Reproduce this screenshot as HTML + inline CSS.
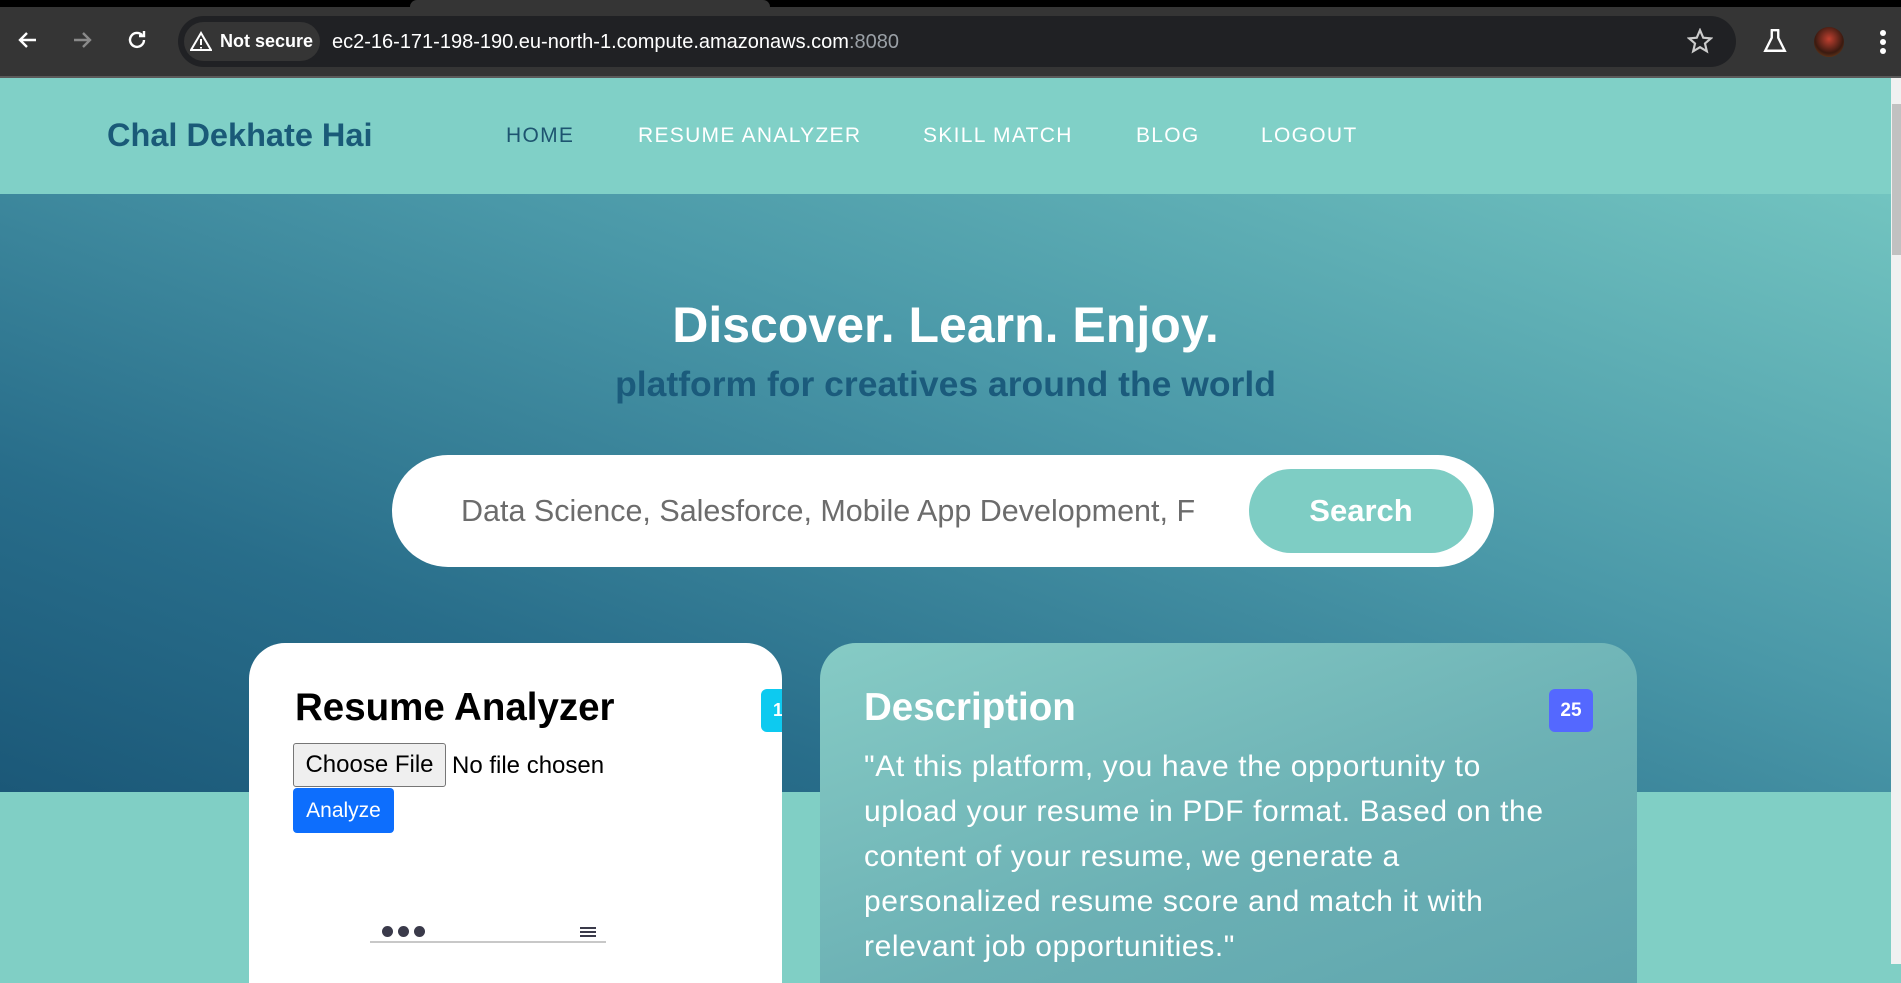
<!DOCTYPE html>
<html><head><meta charset="utf-8"><style>
*{box-sizing:border-box;margin:0;padding:0}
body{width:1901px;height:964px;overflow:hidden;font-family:"Liberation Sans",sans-serif;background:#80cfc5;position:relative}
.abs{position:absolute}
#chrome{left:0;top:0;width:1901px;height:78px;background:#353535;border-bottom:2px solid #5a5a5a}
#tabtop{left:0;top:0;width:1901px;height:7px;background:#000}
#tab{left:410px;top:0;width:360px;height:7px;background:#353535;border-radius:8px 8px 0 0}
#omni{left:178px;top:16px;width:1558px;height:51px;background:#202124;border-radius:26px}
#ns{left:184px;top:22px;width:136px;height:39px;background:#353535;border-radius:20px;color:#fff;font-size:18px;font-weight:bold;line-height:39px;padding-left:36px}
#url{left:332px;top:31px;font-size:20px;color:#fff}
#nav{left:0;top:78px;width:1891px;height:116px;background:#80d0c7}
#logo{left:107px;top:117px;font-size:32.5px;font-weight:bold;color:#1a5a78}
.ni{top:124px;font-size:21px;color:#fff;letter-spacing:1.3px}
#hero{left:0;top:194px;width:1891px;height:598px;background:linear-gradient(200deg,#72c4c0 0%,#4a98a8 40%,#286d8a 75%,#1b5878 100%)}
#h1{left:0;width:1891px;top:296px;text-align:center;color:#fff;font-size:50px;font-weight:bold}
#h2{left:0;width:1891px;top:364px;text-align:center;color:#1b5b7c;font-size:35.5px;font-weight:bold}
#search{left:392px;top:455px;width:1102px;height:112px;background:#fff;border-radius:56px}
#ph{left:461px;top:494px;font-size:30.5px;color:#6c6c6c;white-space:nowrap;width:740px;overflow:hidden}
#btn{left:1249px;top:469px;width:224px;height:84px;background:#7ecdc4;border-radius:42px;color:#fff;font-size:31px;font-weight:bold;text-align:center;line-height:84px}
#lc{left:249px;top:643px;width:533px;height:340px;background:#fff;border-radius:36px 36px 0 0}
#rc{left:820px;top:643px;width:817px;height:340px;border-radius:36px 36px 0 0;background:linear-gradient(160deg,#86cbc5,#6bb0b4 60%,#5fa6ae);overflow:hidden}
.t{top:686px;font-size:38.5px;font-weight:bold}
#p{left:864px;top:744px;color:#fff;font-size:30px;letter-spacing:.6px;line-height:45px;white-space:nowrap}
</style></head><body>
<div class="abs" id="chrome"></div><div class="abs" id="tabtop"></div><div class="abs" id="tab"></div>
<svg class="abs" style="left:16px;top:28px" width="24" height="24" viewBox="0 0 24 24"><path d="M20 12H5M11 5l-7 7 7 7" stroke="#fff" stroke-width="2.4" fill="none"/></svg>
<svg class="abs" style="left:70px;top:28px" width="24" height="24" viewBox="0 0 24 24"><path d="M4 12h15M13 5l7 7-7 7" stroke="#8a8a8a" stroke-width="2.4" fill="none"/></svg>
<svg class="abs" style="left:125px;top:28px" width="24" height="24" viewBox="0 0 24 24"><path d="M19 12a7 7 0 1 1-2-5M19 3v5h-5" stroke="#fff" stroke-width="2.4" fill="none"/></svg>
<div class="abs" id="omni"></div>
<div class="abs" id="ns">Not secure</div>
<svg class="abs" style="left:190px;top:31px" width="22" height="20" viewBox="0 0 22 20"><path d="M11 2L1 19h20z M11 8v6 M11 16v1.5" stroke="#fff" stroke-width="2" fill="none"/></svg>
<div class="abs" id="url">ec2-16-171-198-190.eu-north-1.compute.amazonaws.com<span style="color:#9aa0a6">:8080</span></div>
<svg class="abs" style="left:1687px;top:28px" width="26" height="26" viewBox="0 0 24 24"><path d="M12 2l3 7 7 .6-5.4 4.7 1.7 7.2L12 17.7 5.7 21.5l1.7-7.2L2 9.6 9 9z" stroke="#ccc" stroke-width="2" fill="none"/></svg>
<svg class="abs" style="left:1762px;top:28px" width="26" height="26" viewBox="0 0 24 24"><path d="M8 2h8M9 2v7L3 21h18L15 9V2" stroke="#fff" stroke-width="2.2" fill="none"/></svg>
<div class="abs" style="left:1814px;top:27px;width:30px;height:30px;border-radius:50%;background:radial-gradient(circle at 50% 40%,#c04030,#3a1a10 60%,#8a5020)"></div>
<div class="abs" style="left:1880px;top:30px;width:6px;height:6px;border-radius:3px;background:#fff;box-shadow:0 9px 0 #fff,0 18px 0 #fff"></div>
<div class="abs" id="nav"></div>
<div class="abs" id="logo">Chal Dekhate Hai</div>
<div class="abs ni" style="left:506px;color:#1d5470">HOME</div>
<div class="abs ni" style="left:638px">RESUME ANALYZER</div>
<div class="abs ni" style="left:923px">SKILL MATCH</div>
<div class="abs ni" style="left:1136px">BLOG</div>
<div class="abs ni" style="left:1261px">LOGOUT</div>
<div class="abs" id="hero"></div>
<div class="abs" id="h1">Discover. Learn. Enjoy.</div>
<div class="abs" id="h2">platform for creatives around the world</div>
<div class="abs" id="search"></div>
<div class="abs" id="ph">Data Science, Salesforce, Mobile App Development, F</div>
<div class="abs" id="btn">Search</div>
<div class="abs" id="lc"></div>
<div class="abs t" style="left:295px;color:#000">Resume Analyzer</div>
<div class="abs" style="left:761px;top:689px;width:21px;height:43px;background:#0dcaf0;border-radius:6px 0 0 6px;color:#fff;font-weight:bold;font-size:18px;line-height:43px;padding-left:12px;overflow:hidden">1</div>
<div class="abs" style="left:293px;top:743px;width:153px;height:44px;background:#efefef;border:1px solid #767676;border-radius:3px;font-size:24px;line-height:42px;text-align:center;color:#000">Choose File</div>
<div class="abs" style="left:452px;top:752px;font-size:24px;color:#000">No file chosen</div>
<div class="abs" style="left:293px;top:788px;width:101px;height:45px;background:#0d6efd;border-radius:4px;color:#fff;font-size:21px;line-height:45px;text-align:center">Analyze</div>
<div class="abs" style="left:382px;top:926px;width:11px;height:11px;border-radius:50%;background:#3a3a4a;box-shadow:16px 0 0 #3a3a4a,32px 0 0 #3a3a4a"></div>
<div class="abs" style="left:580px;top:927px;width:16px;height:2px;background:#3a3a4a;box-shadow:0 4px 0 #3a3a4a,0 8px 0 #3a3a4a"></div>
<div class="abs" style="left:370px;top:941px;width:236px;height:2px;background:#c8c8c8"></div>
<div class="abs" id="rc"></div>
<div class="abs t" style="left:864px;color:#fff">Description</div>
<div class="abs" style="left:1549px;top:689px;width:44px;height:43px;background:#5468ff;border-radius:6px;color:#fff;font-weight:bold;font-size:19px;line-height:43px;text-align:center">25</div>
<div class="abs" id="p">"At this platform, you have the opportunity to<br>upload your resume in PDF format. Based on the<br>content of your resume, we generate a<br>personalized resume score and match it with<br>relevant job opportunities."</div>
<div class="abs" style="left:1891px;top:78px;width:10px;height:886px;background:#f1f1f1"></div>
<div class="abs" style="left:1892px;top:104px;width:9px;height:151px;background:#c1c1c1"></div>
</body></html>
